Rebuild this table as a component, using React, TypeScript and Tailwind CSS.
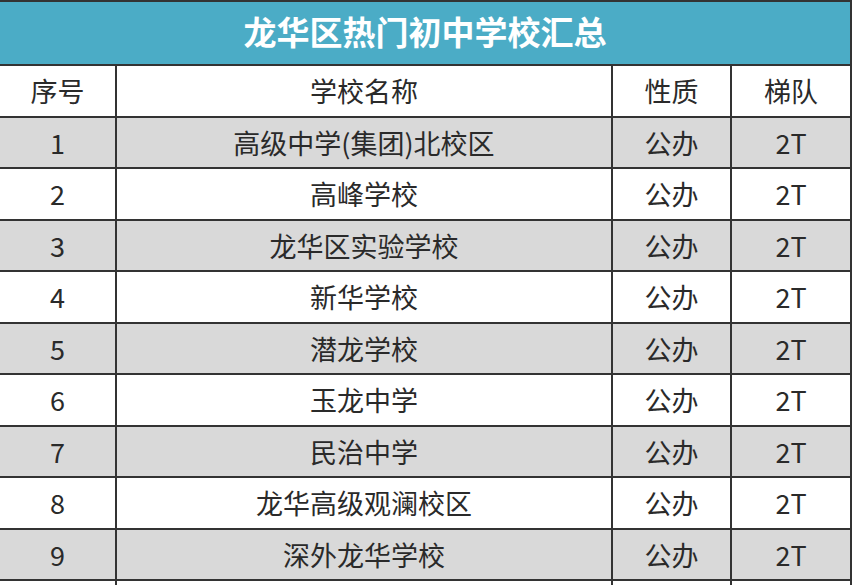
const schools = [
  "高级中学(集团)北校区",
  "高峰学校",
  "龙华区实验学校",
  "新华学校",
  "潜龙学校",
  "玉龙中学",
  "民治中学",
  "龙华高级观澜校区",
  "深外龙华学校",
];

const rows = schools.map((name, i) => ({ no: String(i + 1), name, type: "公办", tier: "2T" }));

const cell = "flex items-center justify-center border-r-2 border-[#333]";

function Row({ cols, gray }: { cols: string[]; gray?: boolean }) {
  return (
    <div
      className={`grid h-[51.5px] grid-cols-[117px_496px_119px_120px] border-b-2 border-[#333] ${
        gray ? "bg-[#d9d9d9]" : "bg-white"
      }`}
    >
      {cols.map((c, i) => (
        <div key={i} className={cell}>
          {c}
        </div>
      ))}
    </div>
  );
}

export default function App() {
  return (
    <div
      className="h-[585px] w-[853px] overflow-hidden bg-white text-[27px] leading-none text-[#2a2a2a]"
      style={{ fontFamily: '"Noto Sans CJK SC", "Microsoft YaHei", sans-serif' }}
    >
      <div className="w-[852px]">
        <div className="flex h-[66px] items-center justify-center border-y-2 border-r-2 border-[#333] bg-[#4bacc6] pb-1 text-[33px] font-bold text-white">
          龙华区热门初中学校汇总
        </div>
        <Row cols={["序号", "学校名称", "性质", "梯队"]} />
        {rows.map((r, i) => (
          <Row key={r.no} cols={[r.no, r.name, r.type, r.tier]} gray={i % 2 === 0} />
        ))}
        <Row cols={["", "", "", ""]} />
      </div>
    </div>
  );
}
